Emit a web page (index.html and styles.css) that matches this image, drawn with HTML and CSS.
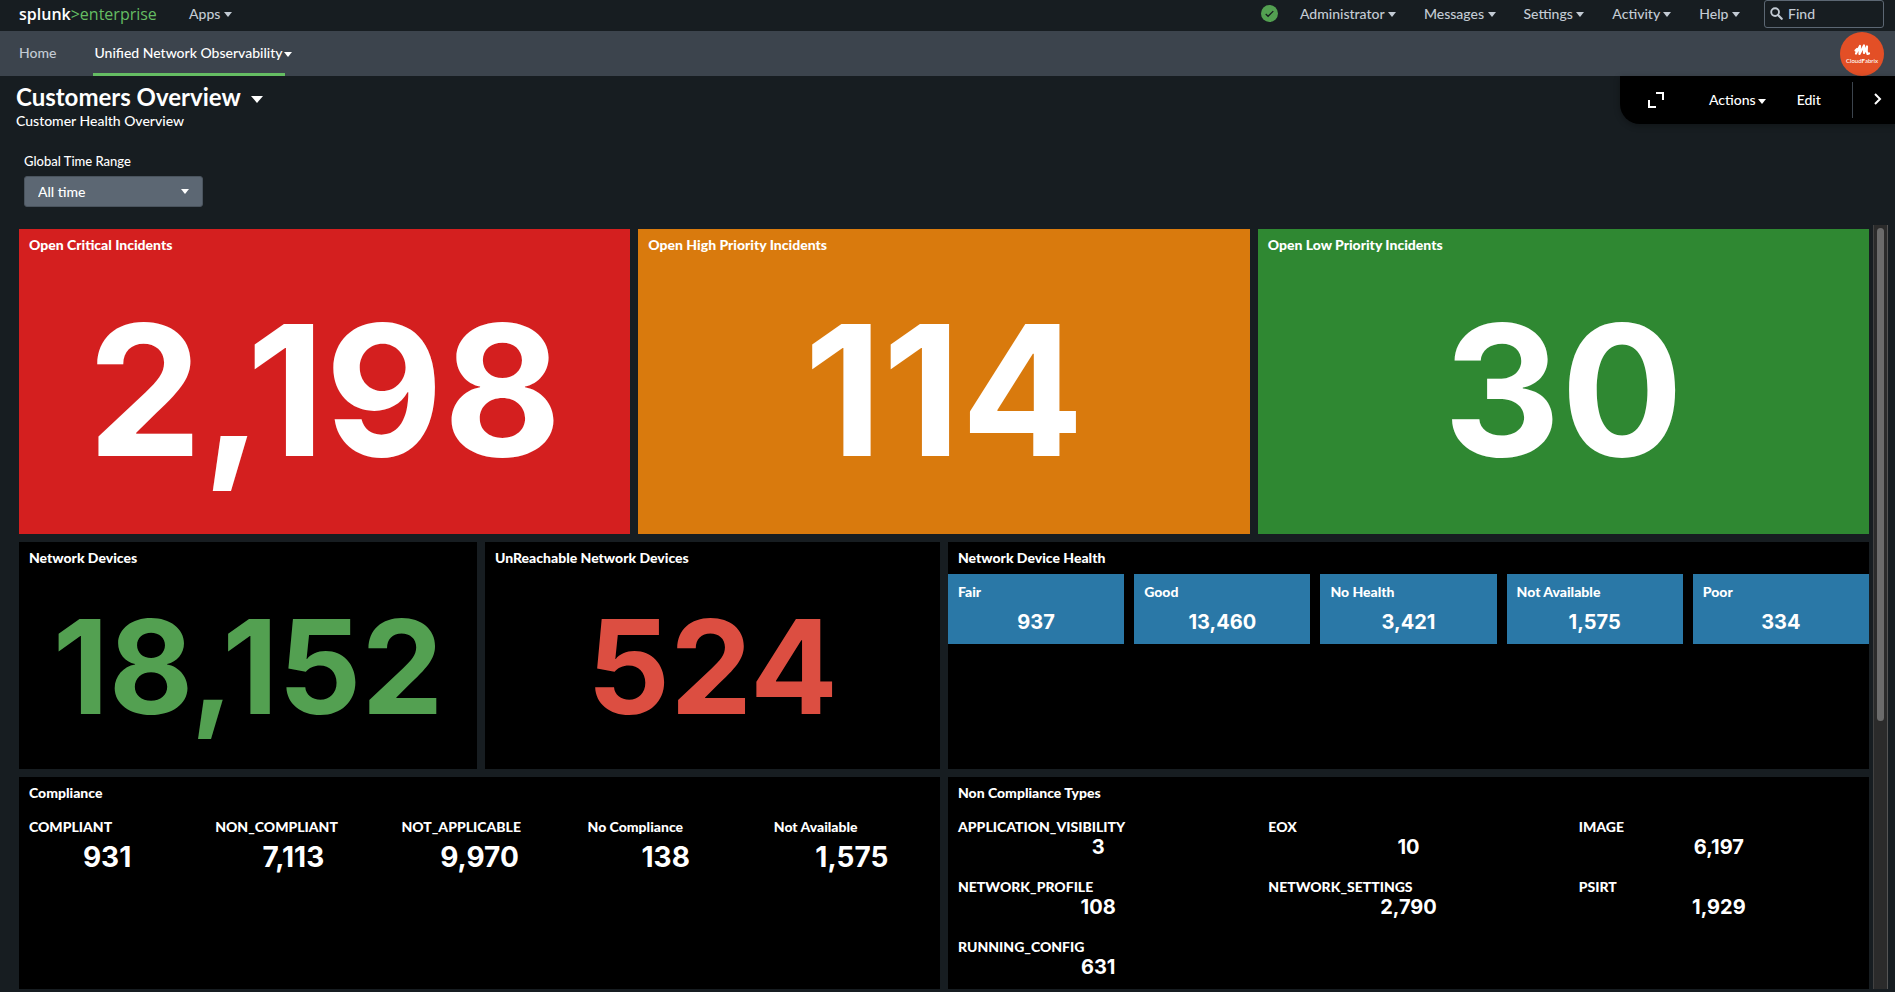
FILE: index.html
```html
<!DOCTYPE html>
<html lang="en">
<head>
    <meta charset="UTF-8">
    <meta name="viewport" content="width=device-width, initial-scale=1.0">
    <title>Customers Overview</title>
    <link rel="stylesheet" href="styles.css">
</head>
<body>
    <header class="topbar">
        <a class="brand" href="#">splunk<span>&gt;enterprise</span></a>
        <button class="menu" type="button">Apps <i class="caret"></i></button>
        <nav class="user-menu">
            <svg class="status" viewBox="0 0 18 18" role="img" aria-label="Healthy">
                <circle cx="9" cy="9" r="9" fill="#53a051"/>
                <path d="M5 9.5l2.5 2.5L13 6.5" fill="none" stroke="#171d21" stroke-width="1.4"/>
            </svg>
            <button class="menu" type="button">Administrator <i class="caret"></i></button>
            <button class="menu" type="button">Messages <i class="caret"></i></button>
            <button class="menu" type="button">Settings <i class="caret"></i></button>
            <button class="menu" type="button">Activity <i class="caret"></i></button>
            <button class="menu" type="button">Help <i class="caret"></i></button>
        </nav>
        <div class="find">
            <svg viewBox="0 0 14 14" aria-hidden="true">
                <circle cx="5.5" cy="5.5" r="4.2" fill="none" stroke="#c3cbd4" stroke-width="2"/>
                <path d="M8.6 8.6l4 4" stroke="#c3cbd4" stroke-width="2.4" stroke-linecap="round"/>
            </svg>
            <input type="text" placeholder="Find" aria-label="Find">
        </div>
    </header>

    <nav class="appbar">
        <a class="tab" href="#">Home</a>
        <a class="tab active" href="#">Unified Network Observability<i class="caret"></i></a>
        <svg class="app-logo" viewBox="0 0 44 44" role="img" aria-label="CloudFabrix">
            <circle cx="22" cy="22" r="22" fill="#e34f26"/>
            <path d="M15.500 18.500l1.500-1.500M16 21.500l4-7.500-.5 8 4.500-8.500v7.500l3-6.500c-.5 3-.5 5.500.5 7.500l1.500-.5" fill="none" stroke="#fff" stroke-width="2.200" stroke-linecap="round" stroke-linejoin="round"/>
            <text x="22" y="31" text-anchor="middle">Cloud<tspan font-weight="700">F</tspan>abrix</text>
        </svg>
    </nav>

    <section class="page-head">
        <div>
            <h1>Customers Overview <i class="caret"></i></h1>
            <p>Customer Health Overview</p>
        </div>
        <div class="toolbar">
            <button type="button" aria-label="Fullscreen">
                <svg class="expand" viewBox="0 0 16 16"><path d="M8 1h7v7M1 8v7h7" fill="none" stroke="#fff" stroke-width="2"/></svg>
            </button>
            <button class="actions" type="button">Actions<i class="caret"></i></button>
            <button type="button">Edit</button>
            <button class="collapse" type="button" aria-label="Collapse">
                <svg viewBox="0 0 8 12"><path d="M1 1l5 5-5 5" fill="none" stroke="#fff" stroke-width="2"/></svg>
            </button>
        </div>
    </section>

    <form class="filters">
        <label for="range">Global Time Range</label>
        <div class="select">
            <select id="range">
                <option>All time</option>
            </select>
            <i class="caret"></i>
        </div>
    </form>

    <div class="scroller">
        <main class="dashboard">
            <div class="row incidents">
                <section class="panel red"><h2>Open Critical Incidents</h2><p class="big">2,198</p></section>
                <section class="panel orange"><h2>Open High Priority Incidents</h2><p class="big">114</p></section>
                <section class="panel green"><h2>Open Low Priority Incidents</h2><p class="big">30</p></section>
            </div>

            <div class="row devices">
                <div class="row counts">
                    <section class="panel"><h2>Network Devices</h2><p class="medium up">18,152</p></section>
                    <section class="panel"><h2>UnReachable Network Devices</h2><p class="medium down">524</p></section>
                </div>
                <section class="panel">
                    <h2>Network Device Health</h2>
                    <div class="tiles health">
                        <div class="tile"><h3>Fair</h3><p>937</p></div>
                        <div class="tile"><h3>Good</h3><p>13,460</p></div>
                        <div class="tile"><h3>No Health</h3><p>3,421</p></div>
                        <div class="tile"><h3>Not Available</h3><p>1,575</p></div>
                        <div class="tile"><h3>Poor</h3><p>334</p></div>
                    </div>
                </section>
            </div>

            <div class="row types">
                <section class="panel">
                    <h2>Compliance</h2>
                    <div class="tiles compliance">
                        <div class="tile"><h3>COMPLIANT</h3><p>931</p></div>
                        <div class="tile"><h3>NON_COMPLIANT</h3><p>7,113</p></div>
                        <div class="tile"><h3>NOT_APPLICABLE</h3><p>9,970</p></div>
                        <div class="tile"><h3>No Compliance</h3><p>138</p></div>
                        <div class="tile"><h3>Not Available</h3><p>1,575</p></div>
                    </div>
                </section>
                <section class="panel">
                    <h2>Non Compliance Types</h2>
                    <div class="tiles non-compliance">
                        <div class="tile"><h3>APPLICATION_VISIBILITY</h3><p>3</p></div>
                        <div class="tile"><h3>EOX</h3><p>10</p></div>
                        <div class="tile"><h3>IMAGE</h3><p>6,197</p></div>
                        <div class="tile"><h3>NETWORK_PROFILE</h3><p>108</p></div>
                        <div class="tile"><h3>NETWORK_SETTINGS</h3><p>2,790</p></div>
                        <div class="tile"><h3>PSIRT</h3><p>1,929</p></div>
                        <div class="tile"><h3>RUNNING_CONFIG</h3><p>631</p></div>
                    </div>
                </section>
            </div>
        </main>
        <div class="scrollbar"><div class="thumb"></div></div>
    </div>
</body>
</html>
```

FILE: styles.css
```css
* {
    box-sizing: border-box;
}

body {
    display: flex;
    flex-direction: column;
    min-height: 100vh;
    margin: 0;
    background-color: #171d21;
    color: #fff;
    font-family: Lato, "Open Sans", sans-serif;
    font-size: 14px;
    font-weight: 500;
    line-height: 20px;
}

h1, h2, h3, p {
    margin: 0;
}

button, input, select {
    font: inherit;
    color: inherit;
    background: none;
    border: none;
    padding: 0;
}

a {
    color: inherit;
    text-decoration: none;
}

.caret {
    display: inline-block;
    border-left: 4px solid transparent;
    border-right: 4px solid transparent;
    border-top: 5px solid currentColor;
    vertical-align: middle;
}

/* top bar */
.topbar {
    display: flex;
    align-items: center;
    height: 31px;
    padding: 0 11px 4px 19px;
    color: #c3cbd4;
}

.brand {
    width: 170px;
    color: #fff;
    font-family: "Open Sans", sans-serif;
    font-size: 16px;
    font-weight: 600;
}

.brand span {
    color: #65bd63;
    font-weight: 400;
}

.user-menu {
    display: flex;
    align-items: center;
    gap: 28px;
    margin-left: auto;
}

.status {
    width: 17px;
    height: 17px;
    margin-right: -6px;
}

.find {
    display: flex;
    align-items: center;
    gap: 5px;
    width: 120px;
    height: 28px;
    margin-left: 24px;
    padding-left: 5px;
    border: 1px solid #5c6773;
    border-radius: 3px;
}

.find svg {
    width: 13px;
    height: 13px;
}

.find input {
    width: 80px;
}

.find input::placeholder {
    color: #c3cbd4;
    opacity: 1;
}

/* app bar */
.appbar {
    display: flex;
    align-items: flex-end;
    gap: 37px;
    height: 45px;
    padding: 0 11px 0 19px;
    background-color: #3c444d;
}

.tab {
    height: 33px;
    color: #c3cbd4;
}

.tab.active {
    width: 192px;
    padding-left: 1px;
    border-bottom: 3px solid #65bd63;
    color: #fff;
    white-space: nowrap;
}

.tab .caret {
    margin-left: 1px;
}

.app-logo {
    width: 44px;
    height: 44px;
    margin-left: auto;
}

.app-logo text {
    fill: #fff;
    font-size: 6px;
}

/* title and toolbar */
.page-head {
    display: flex;
    justify-content: space-between;
    align-items: flex-start;
    padding-left: 16px;
}

h1 {
    margin-top: 7px;
    font-size: 24px;
    font-weight: 700;
    line-height: 28px;
}

h1 .caret {
    margin-left: 5px;
    border-left-width: 6px;
    border-right-width: 6px;
    border-top-width: 7px;
}

.toolbar {
    display: flex;
    align-items: center;
    gap: 31px;
    width: 275px;
    height: 48px;
    padding-left: 28px;
    border-radius: 0 0 0 20px;
    background-color: #000;
    box-shadow: 0 2px 6px rgba(0, 0, 0, 0.3);
}

.expand {
    display: block;
    width: 16px;
    height: 16px;
}

.actions {
    margin-left: 14px;
}

.actions .caret {
    margin-left: 2px;
}

.collapse {
    flex: 1;
    height: 36px;
    padding-left: 8px;
    border-left: 1px solid #3c444d;
}

.collapse svg {
    width: 8px;
    height: 12px;
}

/* time range */
.filters {
    margin: 20px 0 18px 24px;
}

.filters label {
    display: block;
    margin-bottom: 5px;
    font-size: 13px;
}

.select {
    position: relative;
    width: 179px;
}

.select select {
    width: 100%;
    height: 31px;
    padding-left: 13px;
    border: 1px solid #4a545e;
    border-radius: 3px;
    background-color: #5c6773;
    appearance: none;
}

.select .caret {
    position: absolute;
    top: 13px;
    right: 14px;
}

/* dashboard */
.scroller {
    display: flex;
    flex: 1;
    gap: 4px;
    margin: 0 7px 3px 19px;
}

.dashboard {
    display: flex;
    flex: 1;
    flex-direction: column;
    gap: 8px;
    padding-top: 4px;
}

.row {
    display: grid;
    grid-template-columns: 1fr 1fr;
    gap: 8px;
}

.incidents {
    grid-template-columns: repeat(3, 1fr);
    min-height: 305px;
}

.devices {
    min-height: 227px;
}

.counts {
    grid-template-columns: 458fr 455fr;
}

.types {
    flex: 1;
}

.panel {
    display: flex;
    flex-direction: column;
    background-color: #000;
}

.red {
    background-color: #d41f1f;
}

.orange {
    background-color: #d97a0d;
}

.green {
    background-color: #2f8832;
}

h2, h3 {
    font-size: 14px;
    font-weight: 900;
    line-height: 20px;
}

h2 {
    padding: 6px 10px;
}

h3 {
    padding-left: 10px;
}

.big, .medium, .tile p {
    font-family: Inter, sans-serif;
    font-weight: 700;
    text-align: center;
}

.big, .medium {
    margin: auto 0;
}

.big {
    padding-bottom: 16px;
    font-size: 182px;
    line-height: 220px;
}

.medium {
    padding-bottom: 10px;
    font-size: 130px;
    line-height: 160px;
}

.up {
    color: #53a051;
}

.down {
    color: #dc4e41;
}

.tiles {
    display: grid;
    grid-template-columns: repeat(5, 1fr);
    gap: 10px;
}

.health .tile {
    height: 70px;
    padding-top: 8px;
    background-color: #2a78a7;
}

.health p {
    font-size: 20px;
    line-height: 40px;
}

.compliance, .non-compliance {
    padding-top: 8px;
}

.compliance p {
    font-size: 28px;
    line-height: 40px;
}

.non-compliance {
    grid-template-columns: repeat(3, 1fr);
}

.non-compliance p {
    height: 30px;
    font-size: 20px;
    line-height: 20px;
}

/* scroll track beside the panels */
.scrollbar {
    width: 15px;
    padding: 3px;
    border-left: 1px solid #424242;
    border-right: 1px solid #555;
    background-color: #2b2b2b;
}

.thumb {
    height: 65%;
    border-radius: 4px;
    background-color: #6b6b6b;
}
```
